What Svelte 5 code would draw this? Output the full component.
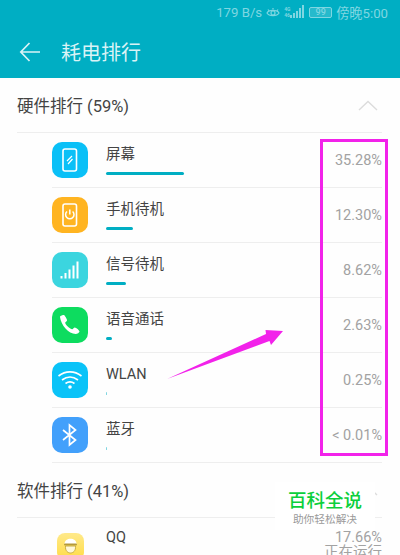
<script>
	const hardware = [
		{ name: '屏幕', value: '35.28%', bar: 78, icon: 'screen' },
		{ name: '手机待机', value: '12.30%', bar: 27, icon: 'standby' },
		{ name: '信号待机', value: '8.62%', bar: 20, icon: 'signal' },
		{ name: '语音通话', value: '2.63%', bar: 6, icon: 'call' },
		{ name: 'WLAN', value: '0.25%', bar: 1, icon: 'wifi' },
		{ name: '蓝牙', value: '< 0.01%', bar: 1, icon: 'bluetooth' }
	];
</script>

<div class="phone">
	<header class="top">
		<div class="status">
			<span>179 B/s</span>
			<svg width="14" height="11" viewBox="0 0 14 11" fill="none" stroke="currentColor" stroke-width="1.200">
				<path d="M1 6c2-3.400 10-3.400 12 0-2 3.400-10 3.400-12 0z" />
				<circle cx="7" cy="6" r="2" />
				<path d="M2 2.500 3.200 4M12 2.500 10.800 4M7 1v1.600" />
			</svg>
			<span class="net">
				<span class="net-label">4G<br />46</span>
				<i style="height:3px"></i><i style="height:5px"></i><i style="height:7px"></i><i style="height:10px"></i><i style="height:13px"></i>
			</span>
			<span class="battery"><b>99</b></span>
			<span>傍晚5:00</span>
		</div>
		<div class="title-row">
			<svg class="back" width="22" height="22" viewBox="0 0 22 22" fill="none" stroke="currentColor" stroke-width="1.700">
				<path d="M21 11H2M10.500 2 1.800 11l8.700 9" />
			</svg>
			<h1>耗电排行</h1>
		</div>
	</header>

	<section class="head">
		<h2>硬件排行 (59%)</h2>
		<svg width="20" height="11" viewBox="0 0 20 11" fill="none" stroke="#dcdcdc" stroke-width="1.400">
			<path d="M1 10 10 1.500l9 8.500" />
		</svg>
	</section>

	<ul class="list">
		{#each hardware as row}
			<li class="row">
				<span class="app app-{row.icon}">
					{#if row.icon === 'screen'}
						<svg width="36" height="36" viewBox="0 0 36 36" fill="none" stroke="#fff">
							<rect x="11" y="7" width="13.500" height="22" rx="2" stroke-width="1.600" />
							<path d="m15 19 5-5M16 22l4.500-5" stroke-width="1.200" />
						</svg>
					{:else if row.icon === 'standby'}
						<svg width="36" height="36" viewBox="0 0 36 36" fill="none" stroke="#fff">
							<rect x="11" y="7" width="13.500" height="22" rx="2" stroke-width="1.600" />
							<path d="M15 14.500a4.200 4.200 0 1 0 5.600 0M17.800 12.500v5" stroke-width="1.500" />
						</svg>
					{:else if row.icon === 'signal'}
						<svg width="36" height="36" viewBox="0 0 36 36" fill="#fff">
							<rect x="8.500" y="24" width="2" height="2.500" />
							<rect x="12.500" y="21" width="2" height="5.500" />
							<rect x="16.500" y="17.500" width="2" height="9" />
							<rect x="20.500" y="13.500" width="2" height="13" />
							<rect x="24.500" y="9.500" width="2" height="17" />
						</svg>
					{:else if row.icon === 'call'}
						<svg width="36" height="36" viewBox="0 0 36 36" fill="#fff">
							<path d="M8 10c-.4-.9 3-2.500 4-2 .9.400 3.300 4.500 3 5.500-.3.900-1.800 1.500-1.800 2.300 0 2 4.500 6 7 6.500.8.100 1.700-1.700 2.600-1.700 1.300 0 4.700 3 4.700 3.900 0 1-2.300 2.500-3.800 2.500C16.500 27 9 18 8 10z" />
						</svg>
					{:else if row.icon === 'wifi'}
						<svg width="36" height="36" viewBox="0 0 36 36" fill="none" stroke="#fff" stroke-width="1.600">
							<path d="M6.500 14c7-5.500 16-5.500 23 0M10 18c5-3.800 11-3.800 16 0M13.500 21.500c3-2.200 6-2.200 9 0" />
							<circle cx="18" cy="25" r="1.800" fill="#fff" stroke="none" />
						</svg>
					{:else}
						<svg width="36" height="36" viewBox="0 0 36 36" fill="none" stroke="#fff" stroke-width="1.700">
							<path d="m11 13 12.500 10-6 5V8l6 5L11 23" />
						</svg>
					{/if}
				</span>
				<div class="info">
					<span class="name">{row.name}</span>
					<span class="bar" class:thin={row.bar === 1} style="width:{row.bar}px"></span>
				</div>
				<span class="value">{row.value}</span>
			</li>
		{/each}
	</ul>

	<section class="head second">
		<h2>软件排行 (41%)</h2>
		<svg width="20" height="11" viewBox="0 0 20 11" fill="none" stroke="#dcdcdc" stroke-width="1.400">
			<path d="M1 10 10 1.500l9 8.500" />
		</svg>
	</section>

	<div class="row qq">
		<span class="app app-qq">
			<svg width="27" height="27" viewBox="0 0 27 27">
				<path d="M7.500 11c0-7 12-7 12 0z" fill="#fff" />
				<rect x="7" y="10.500" width="13" height="2" rx="1" fill="#b59a3a" />
				<path d="M8.500 13h10c.5 5-2.500 7-5 7s-5.500-2-5-7z" fill="#fff8d8" stroke="#c9ad45" />
			</svg>
		</span>
		<div class="info"><span class="name">QQ</span></div>
		<div class="qq-value">
			<span>17.66%</span>
			<span>正在运行</span>
		</div>
	</div>

	<!-- annotations drawn over the screenshot -->
	<div class="frame"></div>
	<svg class="arrow" width="120" height="52" viewBox="0 0 120 52">
		<path d="M1 50 100 5 99.500 1l17.500 1-12 14-1.500-4z" fill="#f222ea" />
	</svg>
	<div class="mark">
		<strong>百科全说</strong>
		<span>助你轻松解决</span>
	</div>
</div>

<style>
	:global(body) {
		background: #fff;
	}

	.phone {
		position: relative;
		width: 400px;
		height: 555px;
		overflow: hidden;
		background: #fefefe;
		font-family: Roboto, "Noto Sans CJK SC", sans-serif;
	}

	.top {
		height: 78px;
		background: #00aec3;
		color: #fff;
	}

	.status {
		display: flex;
		align-items: center;
		justify-content: flex-end;
		gap: 4px;
		height: 24px;
		padding-right: 12px;
		color: #7fd6e1;
		font-size: 13.200px;
	}

	.net {
		display: flex;
		align-items: flex-end;
		gap: 1px;
		height: 13px;
		margin-top: -2px;
	}

	.net i {
		display: block;
		width: 2px;
		background: #7fd6e1;
	}

	.net-label {
		width: 5px;
		font-size: 5px;
		line-height: 6px;
		font-weight: 700;
	}

	.battery {
		display: flex;
		align-items: center;
		justify-content: center;
		width: 21px;
		height: 9px;
		margin: 0 0 0 1px;
		border: 1px solid #7fd6e1;
		border-radius: 2px;
		background: rgba(127, 214, 225, 0.3);
	}

	.battery b {
		font-size: 9px;
		font-weight: 500;
	}

	.title-row {
		display: flex;
		align-items: center;
		height: 54px;
		padding-top: 1px;
		box-sizing: border-box;
		padding-left: 19px;
		color: #d9f3f6;
	}

	.back {
		margin-right: 20px;
	}

	h1 {
		margin: 0;
		font-size: 20px;
		font-weight: 400;
	}

	.head {
		display: flex;
		align-items: center;
		justify-content: space-between;
		box-sizing: border-box;
		height: 55px;
		margin: 0 18px 0 17px;
		border-bottom: 1px solid #eeeeee;
		padding-right: 4px;
	}

	h2 {
		margin: 0;
		font-size: 16.500px;
		font-weight: 400;
		color: #444;
	}

	.list {
		list-style: none;
		margin: 0;
		padding: 0;
	}

	.row {
		display: flex;
		align-items: center;
		box-sizing: border-box;
		height: 55px;
		margin: 0 18px 0 52px;
		border-bottom: 1px solid #eeeeee;
	}

	.app {
		display: block;
		flex: none;
		width: 36px;
		height: 36px;
		border-radius: 10px;
		overflow: hidden;
	}

	.app svg {
		display: block;
	}

	.app-screen { background: #0ac0f7; }
	.app-standby { background: #ffb421; }
	.app-signal { background: #3bd5df; }
	.app-call { background: #0ddc5f; }
	.app-wifi { background: #0ac3f8; }
	.app-bluetooth { background: #42a0fb; }

	.info {
		display: flex;
		flex-direction: column;
		align-items: flex-start;
		gap: 7px;
		flex: 1;
		margin-left: 18px;
	}

	.name {
		font-size: 14.500px;
		line-height: 20px;
		color: #444;
	}

	.bar {
		display: block;
		height: 3px;
		border-radius: 2px;
		background: #00aec3;
	}

	.bar.thin {
		opacity: 0.5;
	}

	.value {
		font-size: 14.500px;
		color: #a2a2a2;
		padding-top: 1px;
	}

	.qq {
		border: 0;
		align-items: flex-start;
		padding-top: 9px;
	}

	.app-qq {
		width: 27px;
		height: 27px;
		margin: 6px 0 0 5px;
		border-radius: 8px;
		background: linear-gradient(#ffe98a, #ffdc45);
	}

	.qq .info {
		margin: 1px 0 0 22px;
	}

	.qq-value {
		display: flex;
		flex-direction: column;
		align-items: flex-end;
		margin-top: 3px;
		font-size: 14.500px;
		line-height: 15px;
		color: #a2a2a2;
	}

	.frame {
		position: absolute;
		left: 320px;
		top: 139px;
		width: 68px;
		height: 317px;
		box-sizing: border-box;
		border: 3px solid #f222ea;
	}

	.arrow {
		position: absolute;
		left: 166px;
		top: 329px;
	}

	.mark {
		position: absolute;
		left: 275px;
		top: 482px;
		width: 100px;
		height: 48px;
		display: flex;
		flex-direction: column;
		align-items: center;
		background: #fff;
		padding-top: 8px;
		box-sizing: border-box;
	}

	.mark strong {
		font-size: 18.500px;
		line-height: 22px;
		font-weight: 500;
		color: #0bcf3c;
	}

	.mark span {
		font-size: 10.700px;
		line-height: 16px;
		color: #999;
	}
</style>
